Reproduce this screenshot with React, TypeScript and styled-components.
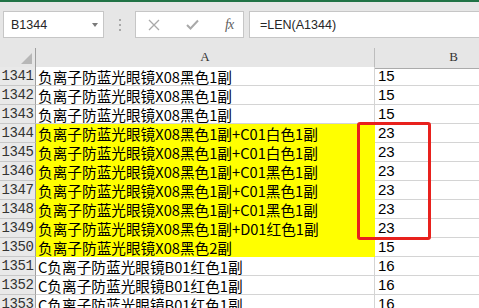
import { Fragment } from "react";
import { createGlobalStyle, styled } from "styled-components";

const GlobalStyle = createGlobalStyle`
  html, body {
    margin: 0;
    padding: 0;
    background: #ffffff;
    overflow: hidden;
  }
`;

const Window = styled.div`
  width: 479px;
  height: 308px;
  overflow: hidden;
  border-top: 2px solid #217346;
  box-sizing: border-box;
  background: #e6e6e6;
`;

const Toolbar = styled.div`
  height: 46px;
  display: flex;
  align-items: flex-start;
  padding: 9px 0 0 3px;
  box-sizing: border-box;
  overflow: hidden;
  font-family: "Liberation Sans", Arial, sans-serif;
`;

const Box = styled.div<{ $width: number; $offset?: number }>`
  flex: none;
  width: ${(p) => p.$width}px;
  height: 27px;
  margin-left: ${(p) => p.$offset ?? 0}px;
  box-sizing: border-box;
  background: #ffffff;
  border: 1px solid #c6c6c6;
  display: flex;
  align-items: center;
`;

const NameText = styled.span`
  flex: 1;
  padding: 1px 0 0 7px;
  font-size: 12.5px;
  color: #262626;
`;

const DropArrow = styled.span`
  width: 0;
  height: 0;
  margin-right: 5px;
  border-left: 3.5px solid transparent;
  border-right: 3.5px solid transparent;
  border-top: 4px solid #7a7a7a;
`;

const Grip = styled.div`
  flex: none;
  width: 31px;
  height: 27px;
  display: flex;
  flex-direction: column;
  align-items: center;
  justify-content: center;
  gap: 3px;
`;

const Dot = styled.span`
  width: 2px;
  height: 2px;
  background: #a8a8a8;
`;

const FuncButtons = styled.div`
  flex: 1;
  display: flex;
  align-items: center;
  padding-left: 12px;
  gap: 26px;
`;

const Fx = styled.span`
  font-family: "Liberation Serif", serif;
  font-style: italic;
  font-size: 14px;
  color: #606060;
  letter-spacing: -1px;
`;

const FormulaText = styled.span`
  padding: 1px 0 0 10px;
  font-size: 12.5px;
  color: #262626;
  white-space: nowrap;
`;

const Sheet = styled.div`
  position: relative;
  display: grid;
  grid-template-columns: 36px 339px 158px;
  grid-auto-rows: 19px;
  background: #ffffff;
`;

const Corner = styled.div`
  height: 21px;
  box-sizing: border-box;
  background: #e6e6e6;
  border-right: 1px solid #9f9f9f;
  border-bottom: 1px solid #ababab;
  display: flex;
  align-items: flex-end;
  justify-content: flex-end;
  padding: 0 3px 4px 0;
`;

const SelectAll = styled.span`
  width: 0;
  height: 0;
  border-left: 11px solid transparent;
  border-bottom: 11px solid #b7b7b7;
`;

const ColHead = styled.div`
  height: 21px;
  box-sizing: border-box;
  background: #e6e6e6;
  border-right: 1px solid #bdbdbd;
  border-bottom: 1px solid #ababab;
  display: flex;
  align-items: flex-end;
  justify-content: center;
  padding-bottom: 3px;
  font-family: "Liberation Serif", serif;
  font-size: 13px;
  color: #333333;
`;

const RowHead = styled.div`
  box-sizing: border-box;
  background: #e9e9e9;
  border-right: 1px solid #9f9f9f;
  border-bottom: 1px solid #c8c8c8;
  display: flex;
  align-items: center;
  justify-content: center;
  font-family: "Liberation Mono", monospace;
  font-size: 14px;
  letter-spacing: -0.4px;
  color: #333333;
  line-height: 19px;
`;

const TextCell = styled.div<{ $fill?: boolean }>`
  box-sizing: border-box;
  background: ${(p) => (p.$fill ? "#ffff00" : "#ffffff")};
  border-right: 1px solid ${(p) => (p.$fill ? "#ffff00" : "#d4d4d4")};
  border-bottom: 1px solid ${(p) => (p.$fill ? "#ffff00" : "#d4d4d4")};
  padding-left: 2px;
  font-family: "Noto Sans CJK SC", sans-serif;
  font-size: 14.67px;
  line-height: 19px;
  color: #000000;
  white-space: nowrap;
  overflow: hidden;
`;

const NumCell = styled.div`
  box-sizing: border-box;
  border-bottom: 1px solid #d4d4d4;
  padding-left: 3px;
  font-family: "Liberation Sans", Arial, sans-serif;
  font-size: 15px;
  line-height: 18px;
  color: #000000;
`;

const Highlight = styled.div`
  position: absolute;
  left: 357px;
  top: 74px;
  width: 74px;
  height: 118px;
  box-sizing: border-box;
  border: 3px solid #e8211d;
  border-radius: 3px;
  pointer-events: none;
`;

interface Row {
  no: number;
  text: string;
  len: number;
  fill?: boolean;
}

const base = "负离子防蓝光眼镜X08黑色1副";
const cBase = "C负离子防蓝光眼镜B01红色1副";

const rows: Row[] = [
  { no: 1341, text: base, len: 15 },
  { no: 1342, text: base, len: 15 },
  { no: 1343, text: base, len: 15 },
  { no: 1344, text: base + "+C01白色1副", len: 23, fill: true },
  { no: 1345, text: base + "+C01白色1副", len: 23, fill: true },
  { no: 1346, text: base + "+C01黑色1副", len: 23, fill: true },
  { no: 1347, text: base + "+C01黑色1副", len: 23, fill: true },
  { no: 1348, text: base + "+C01黑色1副", len: 23, fill: true },
  { no: 1349, text: base + "+D01红色1副", len: 23, fill: true },
  { no: 1350, text: "负离子防蓝光眼镜X08黑色2副", len: 15, fill: true },
  { no: 1351, text: cBase, len: 16 },
  { no: 1352, text: cBase, len: 16 },
  { no: 1353, text: cBase, len: 16 },
];

function App() {
  return (
    <>
      <GlobalStyle />
      <Window>
        <Toolbar>
          <Box $width={101}>
            <NameText>B1344</NameText>
            <DropArrow />
          </Box>
          <Grip>
            <Dot />
            <Dot />
            <Dot />
          </Grip>
          <Box $width={109}>
            <FuncButtons>
              <svg width="12" height="12" viewBox="0 0 12 12">
                <path
                  d="M1 1 L11 11 M11 1 L1 11"
                  stroke="#a9a9a9"
                  strokeWidth="1.3"
                  fill="none"
                />
              </svg>
              <svg width="13" height="11" viewBox="0 0 13 11">
                <path
                  d="M1 6 L4.5 9.5 L12 1.5"
                  stroke="#a9a9a9"
                  strokeWidth="2"
                  fill="none"
                />
              </svg>
              <Fx>fx</Fx>
            </FuncButtons>
          </Box>
          <Box $width={240} $offset={5}>
            <FormulaText>=LEN(A1344)</FormulaText>
          </Box>
        </Toolbar>
        <Sheet>
          <Corner>
            <SelectAll />
          </Corner>
          <ColHead>A</ColHead>
          <ColHead>B</ColHead>
          {rows.map((r) => (
            <Fragment key={r.no}>
              <RowHead>{r.no}</RowHead>
              <TextCell $fill={r.fill}>{r.text}</TextCell>
              <NumCell>{r.len}</NumCell>
            </Fragment>
          ))}
          <Highlight />
        </Sheet>
      </Window>
    </>
  );
}

export default App;
